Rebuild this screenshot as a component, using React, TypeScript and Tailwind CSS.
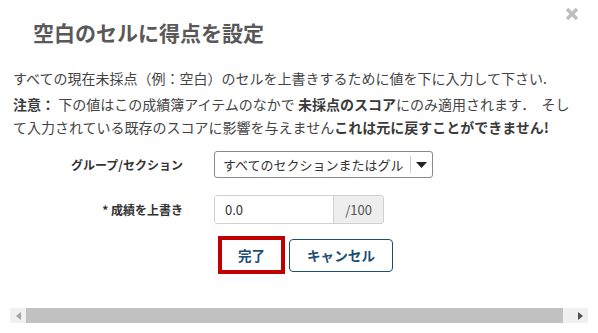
import React from "react";

function CloseIcon() {
  return (
    <svg width="14" height="14" viewBox="0 0 14 14" className="text-[#bdbdbd]">
      <path d="M2 2 L12 12 M12 2 L2 12" stroke="currentColor" strokeWidth="3.4" strokeLinecap="butt" />
    </svg>
  );
}

function FakeScrollbar() {
  return (
    <div className="flex h-[15px] w-[578px] bg-[#f0f0f0] ml-[10px]">
      <div className="w-[16px] flex items-center justify-center">
        <svg width="5" height="8" viewBox="0 0 5 8">
          <path d="M5 0 L0 4 L5 8 Z" fill="#a3a3a3" />
        </svg>
      </div>
      <div className="w-[537px] bg-[#c1c1c1]" />
      <div className="flex-1 flex items-center justify-end pr-[5px]">
        <svg width="5" height="8" viewBox="0 0 5 8">
          <path d="M0 0 L5 4 L0 8 Z" fill="#505050" />
        </svg>
      </div>
    </div>
  );
}

export default function App() {
  return (
    <div className="w-[598px] h-[333px] bg-white relative overflow-hidden font-['Noto_Sans_CJK_JP','Noto_Sans',sans-serif] text-[#444444]">
      {/* Close */}
      <button className="absolute right-[19px] top-[7px]">
        <CloseIcon />
      </button>

      {/* Title */}
      <h1 className="pl-[33px] pt-[18px] text-[21px] leading-[28px] font-bold text-[#595959]">
        空白のセルに得点を設定
      </h1>

      {/* Description */}
      <p className="mt-[22px] pl-[13px] text-[14px] leading-[20px] whitespace-nowrap">
        すべての現在未採点（例：空白）のセルを上書きするために値を下に入力して下さい.
      </p>
      <p className="mt-[5px] pl-[13px] text-[14px] leading-[23px] whitespace-nowrap">
        <b className="text-[#3a3a3a]">注意：</b> 下の値はこの成績簿アイテムのなかで{" "}
        <b className="text-[#3a3a3a]">未採点のスコア</b>にのみ適用されます．&nbsp; そし
        <br />
        て入力されている既存のスコアに影響を与えません
        <b className="text-[#3a3a3a]">これは元に戻すことができません!</b>
      </p>

      {/* Form */}
      <div className="mt-[12px] flex flex-col gap-[17px]">
        <div className="flex items-center">
          <label className="w-[185px] pr-[2px] text-right text-[12px] font-bold text-[#333333]">
            グループ/セクション
          </label>
          <div className="ml-[29px] w-[219px] h-[27px] border border-[#8a8a8a] rounded-[3px] flex items-center">
            <span className="flex-1 pl-[8px] text-[13px] text-[#333333] whitespace-nowrap">
              すべてのセクションまたはグル
            </span>
            <span className="w-px h-[17px] bg-[#cccccc]" />
            <span className="w-[21px] flex items-center justify-center">
              <svg width="11" height="6" viewBox="0 0 11 6">
                <path d="M0 0 H11 L5.5 6 Z" fill="#222222" />
              </svg>
            </span>
          </div>
        </div>
        <div className="flex items-center">
          <label className="w-[185px] pr-[2px] text-right text-[12px] font-bold text-[#333333]">
            * 成績を上書き
          </label>
          <div className="ml-[29px] flex h-[29px] border border-[#d0d0d0] rounded-[3px] overflow-hidden">
            <input
              defaultValue="0.0"
              className="w-[118px] pl-[10px] text-[13px] text-[#333333] bg-white outline-none"
            />
            <span className="w-[50px] bg-[#eeeeee] border-l border-[#d0d0d0] flex items-center justify-center text-[13px] text-[#555555]">
              /100
            </span>
          </div>
        </div>
      </div>

      {/* Actions */}
      <div className="mt-[12px] pl-[218px] flex items-center gap-[4px]">
        <div className="border-[4px] border-[#c00000] w-[67px] h-[38px] flex">
          <button className="flex-1 bg-white text-[13.6px] font-bold text-[#1d4f75]">完了</button>
        </div>
        <button className="w-[104px] h-[33px] border border-[#1d4f75] rounded-[4px] bg-white text-[13.6px] font-bold text-[#1d4f75]">
          キャンセル
        </button>
      </div>

      {/* Horizontal scrollbar */}
      <div className="mt-[34px]">
        <FakeScrollbar />
      </div>
    </div>
  );
}
